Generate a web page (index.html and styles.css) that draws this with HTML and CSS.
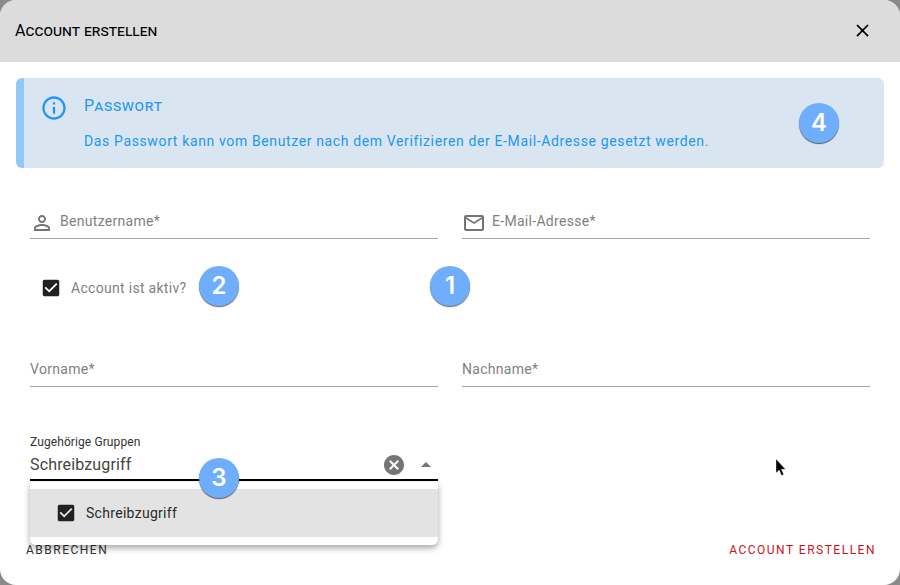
FILE: index.html
```html
<!DOCTYPE html>
<html lang="de">
<head>
<meta charset="utf-8">
<title>Account erstellen</title>
<link rel="stylesheet" href="styles.css">
</head>
<body>
<div class="dialog">
  <header class="dialog-head">
    <h1 class="dialog-title">Account erstellen</h1>
    <svg class="close-icon" viewBox="0 0 24 24" width="21" height="21"><path d="M19 6.41 17.59 5 12 10.59 6.41 5 5 6.41 10.59 12 5 17.59 6.41 19 12 13.41 17.59 19 19 17.59 13.41 12z"/></svg>
  </header>
  <section class="alert">
    <svg class="alert-icon" viewBox="0 0 24 24" width="28" height="28"><path d="M11 7h2v2h-2zm0 4h2v6h-2zm1-9C6.48 2 2 6.48 2 12s4.48 10 10 10 10-4.48 10-10S17.52 2 12 2zm0 18c-4.41 0-8-3.59-8-8s3.59-8 8-8 8 3.59 8 8-3.59 8-8 8z"/></svg>
    <div class="alert-body">
      <div class="alert-title">Passwort</div>
      <div class="alert-text">Das Passwort kann vom Benutzer nach dem Verifizieren der E-Mail-Adresse gesetzt werden.</div>
    </div>
  </section>
  <form class="form">
    <div class="grid row-first">
      <div class="field">
        <svg class="field-icon" viewBox="0 0 24 24" width="24" height="24"><path d="M12 5.9a2.1 2.1 0 1 1 0 4.2 2.1 2.1 0 0 1 0-4.2m0 9c2.97 0 6.1 1.46 6.1 2.1v1.1H5.9V17c0-.64 3.13-2.1 6.1-2.1M12 4C9.79 4 8 5.79 8 8s1.79 4 4 4 4-1.79 4-4-1.79-4-4-4zm0 9c-2.67 0-8 1.34-8 4v3h16v-3c0-2.66-5.33-4-8-4z"/></svg>
        <span class="placeholder">Benutzername*</span>
      </div>
      <div class="field">
        <svg class="field-icon" viewBox="0 0 24 24" width="24" height="24"><path d="M22 6c0-1.100-.9-2-2-2H4c-1.100 0-2 .9-2 2v12c0 1.100.9 2 2 2h16c1.100 0 2-.9 2-2V6zm-2 0-8 5-8-5h16zm0 12H4V8l8 5 8-5v10z"/></svg>
        <span class="placeholder">E-Mail-Adresse*</span>
      </div>
    </div>
    <label class="check-row">
      <svg class="check-icon" viewBox="0 0 24 24" width="22" height="22"><path d="M19 3H5c-1.110 0-2 .9-2 2v14c0 1.100.89 2 2 2h14c1.110 0 2-.9 2-2V5c0-1.100-.89-2-2-2zm-9 14-5-5 1.410-1.410L10 14.170l7.590-7.590L19 8l-9 9z"/></svg>
      <span class="check-label">Account ist aktiv?</span>
    </label>
    <div class="grid row-names">
      <div class="field"><span class="placeholder">Vorname*</span></div>
      <div class="field"><span class="placeholder">Nachname*</span></div>
    </div>
    <div class="grid row-group">
      <div class="group">
        <div class="group-label">Zugehörige Gruppen</div>
        <div class="group-input">
          <span class="group-value">Schreibzugriff</span>
          <svg class="clear-icon" viewBox="0 0 24 24" width="24" height="24"><path d="M12 2C6.470 2 2 6.470 2 12s4.470 10 10 10 10-4.470 10-10S17.530 2 12 2zm5 13.590L15.590 17 12 13.410 8.410 17 7 15.590 10.590 12 7 8.410 8.410 7 12 10.590 15.590 7 17 8.410 13.410 12 17 15.590z"/></svg>
          <svg class="arrow-icon" viewBox="0 0 24 24" width="24" height="24"><path d="m7 14 5-5 5 5z"/></svg>
        </div>
        <div class="menu">
          <div class="menu-item">
            <svg class="check-icon" viewBox="0 0 24 24" width="22" height="22"><path d="M19 3H5c-1.110 0-2 .9-2 2v14c0 1.100.89 2 2 2h14c1.110 0 2-.9 2-2V5c0-1.100-.89-2-2-2zm-9 14-5-5 1.410-1.410L10 14.170l7.590-7.590L19 8l-9 9z"/></svg>
            <span class="menu-text">Schreibzugriff</span>
          </div>
        </div>
      </div>
    </div>
  </form>
  <footer class="dialog-foot">
    <span class="btn btn-cancel">Abbrechen</span>
    <span class="btn btn-submit">Account erstellen</span>
  </footer>
  <span class="badge badge-1">1</span>
  <span class="badge badge-2">2</span>
  <span class="badge badge-3">3</span>
  <span class="badge badge-4">4</span>
  <svg class="pointer" viewBox="0 0 12 18" width="12" height="18"><path d="M1 0v14l3.200-3 2.300 5.500 2.200-.9-2.300-5.300H10.500z" fill="#000" stroke="#fff" stroke-opacity=".6" stroke-width=".6"/></svg>
</div>
</body>
</html>
```

FILE: styles.css
```css
* { box-sizing: border-box; }
html, body { margin: 0; height: 100%; background: #8a8a8a; overflow: hidden; }
body { font-family: Roboto, "Liberation Sans", sans-serif; }

.dialog {
  position: relative;
  width: 900px;
  height: 585px;
  background: #fff;
  border-radius: 16px;
  overflow: hidden;
  display: flex;
  flex-direction: column;
}

.dialog-head {
  height: 62px;
  flex: none;
  background: #dcdcdc;
  padding: 0 27px 0 15px;
  display: flex;
  align-items: center;
  justify-content: space-between;
}
.dialog-title {
  margin: 0;
  font-size: 16px;
  font-weight: 400;
  line-height: 24px;
  font-variant: small-caps;
  letter-spacing: .03px;
  color: #000;
}
.close-icon { fill: #000; margin-top: -2px; }

.alert {
  flex: none;
  margin: 16px 16px 0;
  height: 90px;
  background: #d9e6f2;
  border-left: 8px solid #90c8f8;
  border-radius: 6px;
  padding: 16px 0 0 16px;
  display: flex;
  gap: 16px;
  color: #2196f3;
}
.alert-icon { fill: #2196f3; flex: none; }
.alert-title {
  font-size: 16px;
  line-height: 24px;
  font-variant: small-caps;
  letter-spacing: .65px;
}
.alert-text {
  margin-top: 13px;
  font-size: 14px;
  line-height: 20px;
  letter-spacing: .63px;
}

.form { padding: 0 30px; flex: none; }
.grid { display: grid; grid-template-columns: 408px 408px; column-gap: 24px; }
.row-first { margin-top: 41px; }
.row-names { margin-top: 45px; }
.row-group { margin-top: 49px; }

.field {
  height: 30px;
  border-bottom: 1px solid #a5a5a5;
  display: flex;
  align-items: center;
  gap: 6px;
}
.field-icon { fill: #757575; flex: none; margin-top: -1px; }
.placeholder {
  font-size: 14px;
  line-height: 20px;
  letter-spacing: .3px;
  color: #7f7f7f;
  margin-top: -6px;
}

.check-row { margin-top: 25px; height: 48px; padding-left: 10px; display: flex; align-items: center; gap: 9px; }
.check-icon { fill: #212121; flex: none; }
.check-label { font-size: 14px; line-height: 20px; letter-spacing: .3px; color: #7f7f7f; }

.group { position: relative; }
.group-label { font-size: 12px; line-height: 12px; margin-bottom: 2px; letter-spacing: .1px; color: #333; }
.group-input {
  height: 31px;
  border-bottom: 2px solid #000;
  display: flex;
  align-items: center;
}
.group-value { flex: 1; font-size: 16px; line-height: 24px; letter-spacing: .15px; color: #444; margin-top: 1px; }
.clear-icon { fill: #757575; margin-right: 8px; }
.arrow-icon { fill: #757575; }

.menu {
  position: absolute;
  left: 0;
  right: 0;
  top: 46px;
  padding: 7px 0 8px;
  background: #fff;
  border-radius: 0 0 6px 6px;
  box-shadow: 0 3px 6px rgba(0,0,0,.35);
  z-index: 2;
}
.menu-item {
  height: 48px;
  background: #e3e3e3;
  padding-left: 25px;
  display: flex;
  align-items: center;
  gap: 9px;
}
.menu-text { font-size: 14px; line-height: 20px; letter-spacing: .3px; color: #2a2a2a; margin-top: -1px; }

.dialog-foot {
  margin-top: auto;
  height: 50px;
  padding: 0 24px 20px 26px;
  display: flex;
  align-items: center;
  justify-content: space-between;
  flex: none;
}
.btn { font-size: 12px; line-height: 30px; letter-spacing: 1.5px; text-transform: uppercase; }
.btn-cancel { color: #333; }
.btn-submit { color: #c8141a; }

.badge {
  position: absolute;
  width: 40px;
  height: 40px;
  border-radius: 50%;
  background: #6eaefc;
  box-shadow: 0 1px 1px rgba(0,0,0,.6);
  color: #fff;
  font-family: Inter, "Liberation Sans", sans-serif;
  font-size: 24px;
  font-weight: 600;
  line-height: 40px;
  text-align: center;
  z-index: 3;
}
.badge-1 { left: 430px; top: 266px; }
.badge-2 { left: 199px; top: 266px; }
.badge-3 { left: 199px; top: 458px; }
.badge-4 { left: 799px; top: 103px; }
.pointer { position: absolute; left: 775px; top: 459px; }
```
